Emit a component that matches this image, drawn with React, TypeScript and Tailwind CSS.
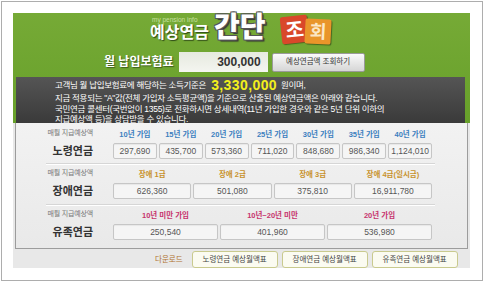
import React from "react";

const oldAge = [
  ["10년 가입", "297,690"],
  ["15년 가입", "435,700"],
  ["20년 가입", "573,360"],
  ["25년 가입", "711,020"],
  ["30년 가입", "848,680"],
  ["35년 가입", "986,340"],
  ["40년 가입", "1,124,010"],
];

const disability = [
  ["장애 1급", "626,360"],
  ["장애 2급", "501,080"],
  ["장애 3급", "375,810"],
  ["장애 4급(일시금)", "16,911,780"],
];

const survivor = [
  ["10년 미만 가입", "250,540"],
  ["10년~20년 미만", "401,960"],
  ["20년 가입", "536,980"],
];

const Section = ({
  name,
  items,
  cols,
  headColor,
}: {
  name: string;
  items: string[][];
  cols: string;
  headColor: string;
}) => (
  <div className="flex">
    <div className="w-[77px] flex flex-col items-end">
      <span className="text-[7px] leading-[10px] text-[#777] tracking-[-0.2px]">매월 지급예상액</span>
      <span className="mt-[5px] text-[11px] leading-[16px] font-bold text-[#333]">{name}</span>
    </div>
    <div className={`ml-[20px] w-[319px] grid gap-x-[2px] ${cols}`}>
      {items.map(([head, val]) => (
        <div key={head} className="flex flex-col items-center">
          <span className={`text-[7.5px] leading-[10px] mt-[2px] font-bold ${headColor}`}>{head}</span>
          <div className="mt-[3px] w-full h-[16px] flex items-center justify-center rounded-[2px] border border-[#c6c6c6] bg-[#f5f5f5] text-[8.5px] text-[#555] shadow-[inset_0_1px_1px_rgba(0,0,0,0.06)]">
            {val}
          </div>
        </div>
      ))}
    </div>
  </div>
);

export default function App() {
  return (
    <div className="w-[484px] h-[282px] bg-white p-[1px] font-['Liberation_Sans','Noto_Sans_CJK_KR',sans-serif]">
      <div className="w-[482px] h-[280px] border border-[#adadad] pl-[11px] pt-[11px]">
        <div className="w-[457px] h-[255px] bg-[#e8e8e8] flex flex-col">
          {/* green header */}
          <div className="bg-gradient-to-b from-[#76aa36] to-[#67a02a] pl-[3px] pr-[5px]">
            <div className="h-[64px] flex flex-col">
              <div className="flex items-end pl-[134px] pt-[1px] h-[30px]">
                <div className="flex flex-col mb-[1px]">
                  <span className="text-[6.5px] leading-[7px] text-[#c8e0a0] pl-[2px]">my pension info</span>
                  <span className="text-[16px] leading-[19px] font-bold text-white [text-shadow:1px_1px_1px_#2f4a17]">예상연금</span>
                </div>
                <span className="ml-[5px] text-[28px] leading-[30px] font-black text-white [text-shadow:-1px_-1px_0_#555,1px_-1px_0_#555,-1px_1px_0_#555,1px_1px_0_#555,2px_2px_1px_#333]">
                  간단
                </span>
                <div className="ml-[16px] flex items-start self-start mt-[2px]">
                  <span className="w-[27px] h-[27px] flex items-center justify-center bg-[#d9482a] -rotate-6 text-[20px] leading-none font-bold text-white rounded-[2px] shadow-[1px_1px_1px_rgba(0,0,0,0.4)]">
                    조
                  </span>
                  <span className="ml-[-3px] mt-[3px] w-[26px] h-[25px] flex items-center justify-center bg-[#e9952a] rotate-3 text-[18px] leading-none font-bold text-[#fbe7c6] rounded-[2px] shadow-[1px_1px_1px_rgba(0,0,0,0.4)]">
                    회
                  </span>
                </div>
              </div>
              <div className="mt-[9px] flex items-center pl-[88px]">
                <span className="text-[12px] font-bold text-white [text-shadow:1px_1px_1px_#3d5e1c]">월 납입보험료</span>
                <div className="ml-[5px] w-[89px] h-[20px] bg-gradient-to-b from-[#e6eadf] to-[#f4f5f0] flex items-center justify-end pr-[7px] text-[12px] font-bold text-[#333]">
                  300,000
                </div>
                <button className="ml-[4px] w-[93px] h-[19px] rounded-[2px] border border-[#9a9a9a] bg-gradient-to-b from-[#fafafa] to-[#d6d6d6] text-[7.5px] text-[#333] flex items-center justify-center">
                  예상연금액 조회하기
                </button>
              </div>
            </div>
            {/* notice */}
            <div className="h-[46px] bg-gradient-to-b from-[#555] to-[#3a3a3a] pl-[39px] text-[8.5px] leading-[10.5px] text-white tracking-[-0.3px]">
              <div className="h-[16px] flex items-center">
                <span>고객님 월 납입보험료에 해당하는 소득기준은</span>
                <span className="ml-[5px] text-[14px] leading-[16px] font-bold text-[#f3f01c] tracking-[0.4px]">3,330,000</span>
                <span className="ml-[4px]">원이며,</span>
              </div>
              <p>지금 적용되는 "A"값(전체 가입자 소득평균액)을 기준으로 산출된 예상연금액은 아래와 같습니다.</p>
              <p>국민연금 콜센터(국번없이 1355)로 전화하시면 상세내역(11년 가입한 경우와 같은 5년 단위 이하의</p>
              <p>지급예상액 등)을 상담받을 수 있습니다.</p>
            </div>
          </div>
          {/* table */}
          <div className="mx-[2px] h-[126px] border border-t-0 border-[#9c9c9c] bg-gradient-to-b from-[#f2f2f2] to-[#e9e9e9] pt-[5px]">
            <Section name="노령연금" items={oldAge} cols="grid-cols-7" headColor="text-[#3c7fbf]" />
            <div className="ml-[30px] mr-[32px] mt-[4px] mb-[3px] h-[2px] border-t border-[#d6d6d6] border-b border-b-white" />
            <Section name="장애연금" items={disability} cols="grid-cols-4" headColor="text-[#c8922c]" />
            <div className="ml-[30px] mr-[32px] mt-[5px] mb-[3px] h-[2px] border-t border-[#d6d6d6] border-b border-b-white" />
            <Section name="유족연금" items={survivor} cols="grid-cols-3" headColor="text-[#c7346d]" />
          </div>
          {/* downloads */}
          <div className="flex items-center pl-[142px] pt-[2px]">
            <span className="text-[7.5px] text-[#b0722e]">다운로드</span>
            <div className="ml-[9px] flex gap-[4px]">
              {["노령연금 예상월액표", "장애연금 예상월액표", "유족연금 예상월액표"].map((t) => (
                <button
                  key={t}
                  className="w-[86px] h-[17px] rounded-[3px] border border-[#c9ca8e] bg-[#fbfbf1] text-[7.5px] text-[#444] flex items-center justify-center"
                >
                  {t}
                </button>
              ))}
            </div>
          </div>
        </div>
      </div>
    </div>
  );
}
